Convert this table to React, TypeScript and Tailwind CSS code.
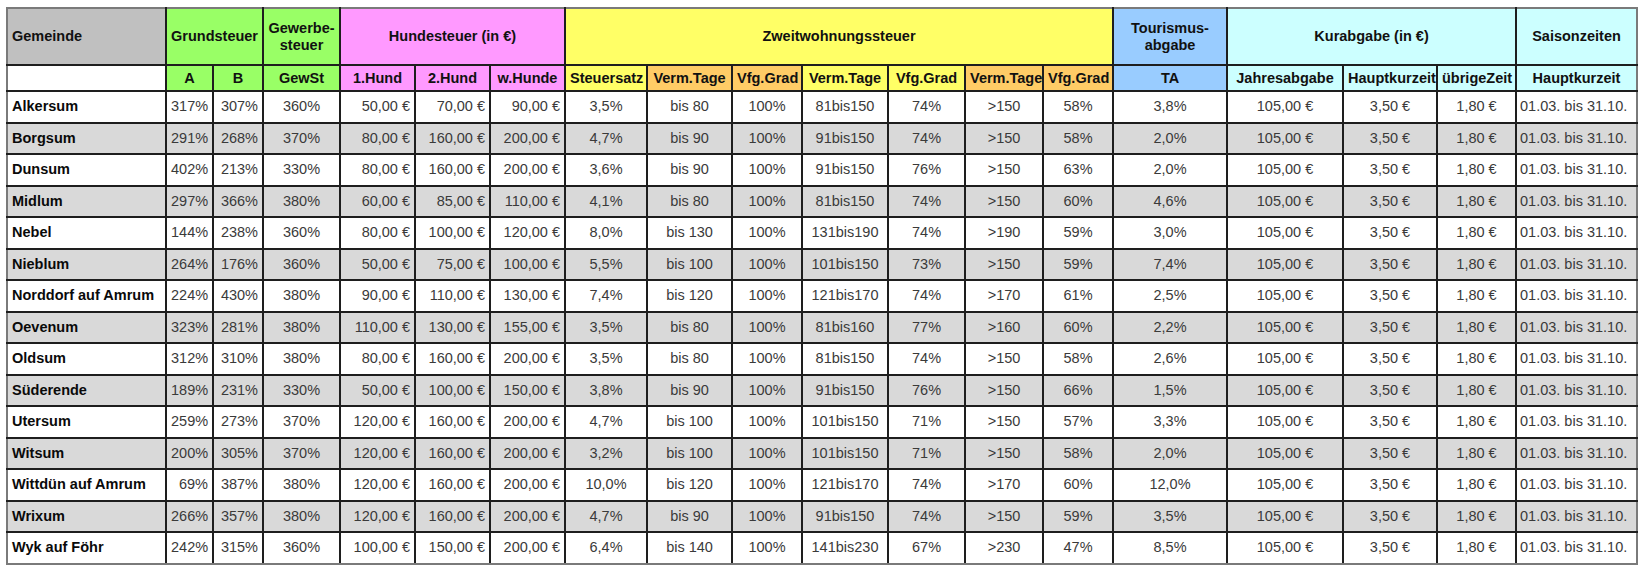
import React from "react";

const widths = [159, 47, 50, 77, 75, 75, 75, 82, 85, 70, 86, 77, 78, 70, 114, 116, 94, 79, 121];

type Row = string[];
const rows: Row[] = [
  ["Alkersum", "317%", "307%", "360%", "50,00 €", "70,00 €", "90,00 €", "3,5%", "bis 80", "100%", "81bis150", "74%", ">150", "58%", "3,8%"],
  ["Borgsum", "291%", "268%", "370%", "80,00 €", "160,00 €", "200,00 €", "4,7%", "bis 90", "100%", "91bis150", "74%", ">150", "58%", "2,0%"],
  ["Dunsum", "402%", "213%", "330%", "80,00 €", "160,00 €", "200,00 €", "3,6%", "bis 90", "100%", "91bis150", "76%", ">150", "63%", "2,0%"],
  ["Midlum", "297%", "366%", "380%", "60,00 €", "85,00 €", "110,00 €", "4,1%", "bis 80", "100%", "81bis150", "74%", ">150", "60%", "4,6%"],
  ["Nebel", "144%", "238%", "360%", "80,00 €", "100,00 €", "120,00 €", "8,0%", "bis 130", "100%", "131bis190", "74%", ">190", "59%", "3,0%"],
  ["Nieblum", "264%", "176%", "360%", "50,00 €", "75,00 €", "100,00 €", "5,5%", "bis 100", "100%", "101bis150", "73%", ">150", "59%", "7,4%"],
  ["Norddorf auf Amrum", "224%", "430%", "380%", "90,00 €", "110,00 €", "130,00 €", "7,4%", "bis 120", "100%", "121bis170", "74%", ">170", "61%", "2,5%"],
  ["Oevenum", "323%", "281%", "380%", "110,00 €", "130,00 €", "155,00 €", "3,5%", "bis 80", "100%", "81bis160", "77%", ">160", "60%", "2,2%"],
  ["Oldsum", "312%", "310%", "380%", "80,00 €", "160,00 €", "200,00 €", "3,5%", "bis 80", "100%", "81bis150", "74%", ">150", "58%", "2,6%"],
  ["Süderende", "189%", "231%", "330%", "50,00 €", "100,00 €", "150,00 €", "3,8%", "bis 90", "100%", "91bis150", "76%", ">150", "66%", "1,5%"],
  ["Utersum", "259%", "273%", "370%", "120,00 €", "160,00 €", "200,00 €", "4,7%", "bis 100", "100%", "101bis150", "71%", ">150", "57%", "3,3%"],
  ["Witsum", "200%", "305%", "370%", "120,00 €", "160,00 €", "200,00 €", "3,2%", "bis 100", "100%", "101bis150", "71%", ">150", "58%", "2,0%"],
  ["Wittdün auf Amrum", "69%", "387%", "380%", "120,00 €", "160,00 €", "200,00 €", "10,0%", "bis 120", "100%", "121bis170", "74%", ">170", "60%", "12,0%"],
  ["Wrixum", "266%", "357%", "380%", "120,00 €", "160,00 €", "200,00 €", "4,7%", "bis 90", "100%", "91bis150", "74%", ">150", "59%", "3,5%"],
  ["Wyk auf Föhr", "242%", "315%", "360%", "100,00 €", "150,00 €", "200,00 €", "6,4%", "bis 140", "100%", "141bis230", "67%", ">230", "47%", "8,5%"],
];

// alignment per data column index (1..14)
const align: Record<number, string> = {
  1: "text-right",
  2: "text-right",
  3: "text-center",
  4: "text-right",
  5: "text-right",
  6: "text-right",
  7: "text-center",
  8: "text-center",
  9: "text-center",
  10: "text-center",
  11: "text-center",
  12: "text-center",
  13: "text-center",
  14: "text-center",
};

const cell = "border-2 border-[#1e1e1e] px-[4px] py-0 whitespace-nowrap";

export default function App() {
  return (
    <div className="bg-white w-[1645px] h-[573px] pt-[7px] pl-[6px] font-['Liberation_Sans',Arial,sans-serif] text-[14.5px] leading-[17px]">
      <table className="table-fixed border-collapse w-[1631px] border-2 border-[#7a7a7a]">
        <colgroup>
          {widths.map((w, i) => (
            <col key={i} style={{ width: w }} />
          ))}
        </colgroup>
        <thead>
          <tr className="h-[57px] font-bold text-[#111]">
            <th className={`${cell} bg-[#c0c0c0] text-left border-l-[#7a7a7a] border-t-[#7a7a7a]`}>Gemeinde</th>
            <th colSpan={2} className={`${cell} bg-[#99ff66] text-center border-t-[#7a7a7a]`}>Grundsteuer</th>
            <th className={`${cell} bg-[#99ff66] text-center border-t-[#7a7a7a]`}>
              Gewerbe-
              <br />
              steuer
            </th>
            <th colSpan={3} className={`${cell} bg-[#ff99ff] text-center border-t-[#7a7a7a]`}>Hundesteuer (in €)</th>
            <th colSpan={7} className={`${cell} bg-[#ffff66] text-center border-t-[#7a7a7a]`}>Zweitwohnungssteuer</th>
            <th className={`${cell} bg-[#99ccff] text-center border-t-[#7a7a7a]`}>
              Tourismus-
              <br />
              abgabe
            </th>
            <th colSpan={3} className={`${cell} bg-[#ccffff] text-center border-t-[#7a7a7a]`}>Kurabgabe (in €)</th>
            <th className={`${cell} bg-[#ccffff] text-center border-t-[#7a7a7a] border-l-[#7a7a7a] border-r-[#7a7a7a]`}>Saisonzeiten</th>
          </tr>
          <tr className="h-[26px] font-bold text-[#111]">
            <th className={`${cell} bg-white border-l-[#7a7a7a]`}></th>
            <th className={`${cell} bg-[#99ff66] text-center`}>A</th>
            <th className={`${cell} bg-[#99ff66] text-center`}>B</th>
            <th className={`${cell} bg-[#99ff66] text-center`}>GewSt</th>
            <th className={`${cell} bg-[#ff99ff] text-center`}>1.Hund</th>
            <th className={`${cell} bg-[#ff99ff] text-center`}>2.Hund</th>
            <th className={`${cell} bg-[#ff99ff] text-center`}>w.Hunde</th>
            <th className={`${cell} bg-[#ffff66] text-center px-[2px]`}>Steuersatz</th>
            <th className={`${cell} bg-[#ffcc66] text-center px-[2px]`}>Verm.Tage</th>
            <th className={`${cell} bg-[#ffcc66] text-center px-[2px]`}>Vfg.Grad</th>
            <th className={`${cell} bg-[#ffff66] text-center px-[2px]`}>Verm.Tage</th>
            <th className={`${cell} bg-[#ffff66] text-center px-[2px]`}>Vfg.Grad</th>
            <th className={`${cell} bg-[#ffcc66] text-center px-[2px]`}>Verm.Tage</th>
            <th className={`${cell} bg-[#ffcc66] text-center px-[2px]`}>Vfg.Grad</th>
            <th className={`${cell} bg-[#99ccff] text-center`}>TA</th>
            <th className={`${cell} bg-[#ccffff] text-center`}>Jahresabgabe</th>
            <th className={`${cell} bg-[#ccffff] text-center px-[2px]`}>Hauptkurzeit</th>
            <th className={`${cell} bg-[#ccffff] text-center px-[2px]`}>übrigeZeit</th>
            <th className={`${cell} bg-[#ccffff] text-center border-l-[#7a7a7a] border-r-[#7a7a7a]`}>Hauptkurzeit</th>
          </tr>
        </thead>
        <tbody>
          {rows.map((r, ri) => {
            const bg = ri % 2 === 0 ? "bg-white" : "bg-[#d9d9d9]";
            const last = ri === rows.length - 1;
            const bb = last ? "border-b-[#7a7a7a]" : "";
            return (
              <tr key={ri} className={`h-[31.5px] ${bg}`}>
                <td className={`${cell} ${bb} border-l-[#7a7a7a] text-left font-bold text-[#0a0a0a]`}>{r[0]}</td>
                {r.slice(1).map((v, ci) => (
                  <td key={ci} className={`${cell} ${bb} ${align[ci + 1]} text-[#3a3a3a]`}>
                    {v}
                  </td>
                ))}
                <td className={`${cell} ${bb} text-center text-[#3a3a3a]`}>105,00 €</td>
                <td className={`${cell} ${bb} text-center text-[#3a3a3a]`}>3,50 €</td>
                <td className={`${cell} ${bb} text-center text-[#3a3a3a]`}>1,80 €</td>
                <td className={`${cell} ${bb} border-l-[#7a7a7a] border-r-[#7a7a7a] text-left text-[#3a3a3a] pl-[3px]`}>01.03. bis 31.10.</td>
              </tr>
            );
          })}
        </tbody>
      </table>
    </div>
  );
}
